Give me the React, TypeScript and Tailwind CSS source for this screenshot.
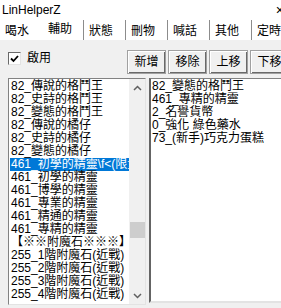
const tabs = ["喝水", "輔助", "狀態", "刪物", "喊話", "其他", "定時"];

const leftItems = [
  "82_傳說的格鬥王",
  "82_史詩的格鬥王",
  "82_變態的格鬥王",
  "82_傳說的橘仔",
  "82_史詩的橘仔",
  "82_變態的橘仔",
  "461_初學的精靈\\f<(限量)",
  "461_初學的精靈",
  "461_博學的精靈",
  "461_專業的精靈",
  "461_精通的精靈",
  "461_專精的精靈",
  "【※※附魔石※※※】",
  "255_1階附魔石(近戰)",
  "255_2階附魔石(近戰)",
  "255_3階附魔石(近戰)",
  "255_4階附魔石(近戰)",
];

const rightItems = [
  "82_變態的格鬥王",
  "461_專精的精靈",
  "2_名譽貨幣",
  "0_強化 綠色藥水",
  "73_(新手)巧克力蛋糕",
];

function Btn({ label }: { label: string }) {
  return (
    <button className="h-[24px] w-[39px] shrink-0 border border-[#a0a0a0] bg-[#f0f0f0] shadow-[inset_1px_1px_0_#fff,inset_-1px_-1px_0_#696969] text-[12px] leading-none">
      {label}
    </button>
  );
}

function Chevron({ up }: { up?: boolean }) {
  return (
    <svg width="9" height="6" viewBox="0 0 9 6" className={up ? "" : "rotate-180"}>
      <path d="M1 5 L4.5 1.5 L8 5" fill="none" stroke="#606060" strokeWidth="1.5" />
    </svg>
  );
}

export default function App() {
  return (
    <div className="w-[281px] h-[308px] overflow-hidden bg-[#f0f0f0] text-[12px] text-black font-['Liberation_Sans','Noto_Sans_CJK_TC',sans-serif]">
      <div className="h-[20px] bg-white flex items-center justify-between pl-[2px] pr-0">
        <span className="text-[12px] leading-none">LinHelperZ</span>
        <span className="text-[14px] leading-none -mr-[3px]">×</span>
      </div>

      <div className="h-[20px] bg-white flex">
        {tabs.map((t, i) => (
          <div
            key={t}
            className={
              "w-[42px] shrink-0 flex items-center pl-[5px] border-r border-[#8c8c8c] leading-none " +
              (i === 1 ? "pb-[3px] pl-[6px]" : "pt-[1px]") +
              (i === 0 ? " border-r-0" : "")
            }
          >
            {t}
          </div>
        ))}
      </div>

      <div className="pl-[8px] pt-[11px]">
        <div className="flex items-start h-[27px]">
          <label className="flex items-center gap-[6px] mt-[1px]">
            <span className="w-[13px] h-[13px] bg-white border border-t-[#696969] border-l-[#696969] border-r-[#e3e3e3] border-b-[#e3e3e3] flex items-center justify-center">
              <svg width="9" height="8" viewBox="0 0 9 8">
                <path d="M1 3.5 L3.5 6 L8 1" fill="none" stroke="#000" strokeWidth="1.8" />
              </svg>
            </span>
            <span className="leading-[13px]">啟用</span>
          </label>
          <div className="ml-auto flex gap-[2px] -mt-[1px] mr-[-8px]">
            <Btn label="新增" />
            <Btn label="移除" />
            <Btn label="上移" />
            <Btn label="下移" />
          </div>
        </div>

        <div className="flex gap-[3px] items-start">
          <div className="w-[138px] h-[227px] bg-white border border-t-[#828282] border-l-[#828282] border-r-[#e3e3e3] border-b-[#e3e3e3] flex overflow-hidden">
            <div className="flex-1 pl-[1px] pt-[1px] overflow-hidden">
              {leftItems.map((it, i) => (
                <div
                  key={it}
                  className={
                    "h-[13px] leading-[13px] whitespace-nowrap pl-[1px] " +
                    (i === 6 ? "bg-[#0078d7] text-white" : "")
                  }
                >
                  {it}
                </div>
              ))}
            </div>
            <div className="w-[16px] bg-[#f0f0f0] flex flex-col items-center">
              <div className="h-[17px] flex items-center justify-center">
                <Chevron up />
              </div>
              <div className="h-[126px]" />
              <div className="w-[15px] h-[16px] bg-[#cdcdcd]" />
              <div className="flex-1" />
              <div className="h-[17px] flex items-center justify-center">
                <Chevron />
              </div>
            </div>
          </div>

          <div className="flex-1 h-[225px] bg-white border-l-2 border-l-[#646464] border-t border-t-[#828282] border-b-2 border-b-[#e3e3e3] pl-[1px] pt-[1px]">
            {rightItems.map((it) => (
              <div key={it} className="h-[13px] leading-[13px] whitespace-nowrap">
                {it}
              </div>
            ))}
          </div>
        </div>
      </div>
    </div>
  );
}
